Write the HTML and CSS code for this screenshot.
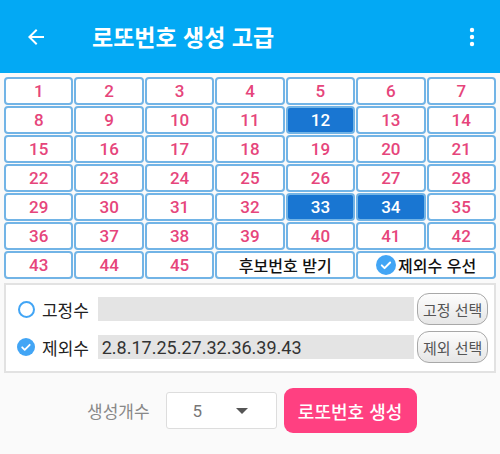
FILE: index.html
```html
<!DOCTYPE html>
<html lang="ko">

<head>
    <meta charset="utf-8">
    <meta name="viewport" content="width=device-width, initial-scale=1.0">

    <title>로또번호 생성 고급</title>

    <link rel="stylesheet" href="styles.css">

</head>

<body>
    <header class="topbar">
        <button class="back" aria-label="뒤로">
            <svg width="24" height="24" viewBox="0 0 24 24"><path d="M20 11H7.83l5.59-5.59L12 4l-8 8 8 8 1.41-1.41L7.83 13H20v-2z" fill="#fff"/></svg>
        </button>
        <h1>로또번호 생성 고급</h1>
        <button class="menu" aria-label="메뉴">
            <svg width="24" height="24" viewBox="0 0 24 24"><circle cx="12" cy="5" r="2.2" fill="#fff"/><circle cx="12" cy="12" r="2.2" fill="#fff"/><circle cx="12" cy="19" r="2.2" fill="#fff"/></svg>
        </button>
    </header>

    <section class="board"></section>

    <section class="panel">
        <div class="row">
            <span class="radio"></span>
            <span class="label">고정수</span>
            <span class="field"></span>
            <button class="pick">고정 선택</button>
        </div>
        <div class="row">
            <span class="check">
                <svg width="18" height="18" viewBox="0 0 18 18"><circle cx="9" cy="9" r="9" fill="#42a5f5"/><path d="M5.2 9.3l2.5 2.5 5-5" stroke="#fff" stroke-width="1.8" fill="none" stroke-linecap="round" stroke-linejoin="round"/></svg>
            </span>
            <span class="label">제외수</span>
            <span class="field">2.8.17.25.27.32.36.39.43</span>
            <button class="pick">제외 선택</button>
        </div>
    </section>

    <section class="bottom">
        <span class="count-label">생성개수</span>
        <div class="select">
            <span>5</span>
            <span class="caret"></span>
        </div>
        <button class="make">로또번호 생성</button>
    </section>

    <script>
        const board = document.querySelector(".board");
        const valgte = [12, 33, 34];

        for (let n = 1; n <= 45; n++) {
            const cell = document.createElement("div");
            cell.className = "cell";
            if (valgte.includes(n)) cell.classList.add("on");
            cell.textContent = n;
            board.appendChild(cell);
        }

        const hent = document.createElement("div");
        hent.className = "cell wide text";
        hent.textContent = "후보번호 받기";
        board.appendChild(hent);

        const prio = document.createElement("div");
        prio.className = "cell wide text";
        prio.innerHTML = '<svg width="20" height="20" viewBox="0 0 18 18"><circle cx="9" cy="9" r="9" fill="#42a5f5"/><path d="M5.2 9.3l2.5 2.5 5-5" stroke="#fff" stroke-width="1.8" fill="none" stroke-linecap="round" stroke-linejoin="round"/></svg>제외수 우선';
        board.appendChild(prio);
    </script>

</body>

</html>
```

FILE: styles.css
```css
body {
    margin: 0;
    background: #fafafa;
    font-family: Roboto, "Noto Sans CJK KR", sans-serif;
}

button {
    font-family: inherit;
}

.topbar {
    height: 73px;
    background: #03a9f4;
    display: flex;
    align-items: center;
    padding: 0 16px 0 24px;
    box-sizing: border-box;
}

.topbar h1 {
    flex: 1;
    margin: 0 0 0 44px;
    color: #fff;
    font-family: "Noto Sans CJK KR", sans-serif;
    font-size: 23px;
    font-weight: 700;
    padding-bottom: 2px;
}

.back,
.menu {
    background: none;
    border: 0;
    padding: 0;
    display: flex;
}

.board {
    margin: 4px 4px 0 4px;
    display: grid;
    grid-template-columns: repeat(7, 1fr);
    grid-auto-rows: 28px;
    gap: 1px;
}

.cell {
    border: 2px solid #72b4e6;
    border-radius: 4px;
    background: #fff;
    color: #e6457b;
    font-size: 17px;
    font-weight: 500;
    display: flex;
    align-items: center;
    justify-content: center;
}

.cell.on {
    background: #1976d2;
    color: #fff;
}

.cell.wide {
    grid-column: span 2;
}

.cell.text {
    color: #111;
    font-family: "Noto Sans CJK KR", sans-serif;
    font-size: 16px;
    font-weight: 500;
}

.cell.text svg {
    margin-right: 2px;
}

.panel {
    margin: 4px 4px 0 4px;
    background: #fff;
    border: 2px solid #e2e2e2;
    padding: 8px 6px 8px 11px;
    display: flex;
    flex-direction: column;
    gap: 6px;
}

.row {
    display: flex;
    align-items: center;
    height: 32px;
}

.radio {
    width: 13px;
    height: 13px;
    border: 2.5px solid #42a5f5;
    border-radius: 50%;
    margin-left: 1px;
}

.check {
    display: flex;
}

.label {
    font-family: "Noto Sans CJK KR", sans-serif;
    font-size: 17px;
    color: #222;
    margin-left: 7px;
    width: 56px;
}

.field {
    width: 318px;
    height: 24px;
    background: #e4e4e4;
    font-size: 18px;
    color: #333;
    padding-left: 4px;
    box-sizing: border-box;
    display: flex;
    align-items: center;
}

.pick {
    margin-left: 3px;
    height: 32px;
    width: 71px;
    border: 1px solid #a8a8a8;
    border-radius: 12px;
    background: linear-gradient(#fdfdfd, #e6e6e6);
    color: #555;
    font-family: "Noto Sans CJK KR", sans-serif;
    font-size: 15px;
    padding: 0;
}

.bottom {
    display: flex;
    align-items: center;
    padding: 15px 0 0 87px;
}

.count-label {
    font-family: "Noto Sans CJK KR", sans-serif;
    font-size: 17px;
    color: #888;
    margin-right: 16px;
}

.select {
    width: 111px;
    height: 37px;
    border: 1px solid #ddd;
    border-radius: 3px;
    background: #fff;
    box-sizing: border-box;
    display: flex;
    align-items: center;
    padding-left: 26px;
    font-size: 17px;
    color: #777;
}

.caret {
    margin-left: 34px;
    width: 0;
    height: 0;
    border-left: 6px solid transparent;
    border-right: 6px solid transparent;
    border-top: 6px solid #555;
}

.make {
    margin-left: 7px;
    width: 133px;
    height: 45px;
    border: 0;
    border-radius: 9px;
    background: #ff4081;
    color: #fff;
    font-family: "Noto Sans CJK KR", sans-serif;
    font-size: 18px;
    font-weight: 500;
}
```
